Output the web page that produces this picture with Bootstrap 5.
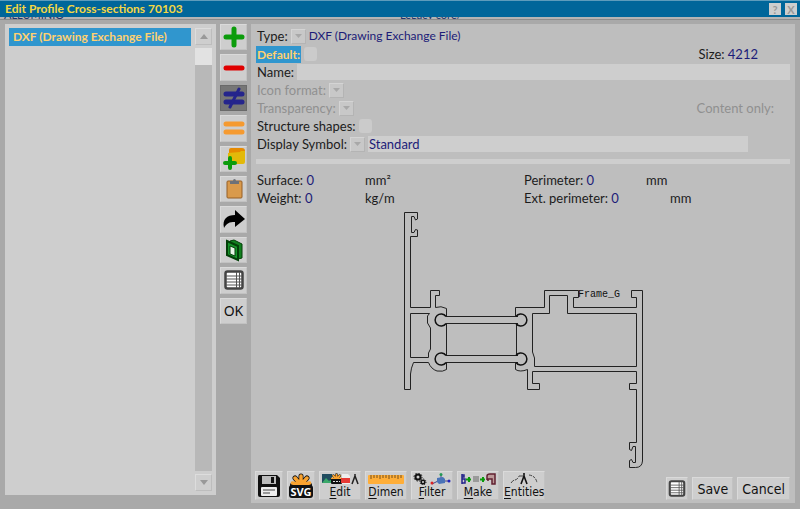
<!DOCTYPE html>
<html lang="en">
<head>
<meta charset="utf-8">
<meta name="viewport" content="width=device-width, initial-scale=1">
<title>Edit Profile Cross-sections 70103</title>
<link rel="stylesheet" href="https://cdn.jsdelivr.net/npm/bootstrap@5.3.0/dist/css/bootstrap.min.css">
<style>
:root{--face:#cecece;--panel:#bebebe;--frame:#a9a9a9;--ink:#1c1c1c;--value:#1c1c78;--pick:#3096ce;--gold:#ffd070}
body{font:13px/18px Lato,"Open Sans",sans-serif;color:var(--ink);background:var(--frame)}
.titlebar{height:17px;background:#00669a;border-top:1px solid #5d9cbc;color:#f5d742;padding:0 3px 0 5px}
.titlebar h1{font-size:12px;line-height:16px;font-weight:700}
.titlebar button{width:12px;height:12px;line-height:11px;font-size:11px;font-weight:700;color:#999;background:var(--face);border:0;padding:0}
.under-strip{height:3px;overflow:hidden;font-size:11px;background:#b4b4b4;border-bottom:1px solid #8c8c8c;color:#24346a}
.under-strip span{line-height:16px;margin-top:-10px}
.workspace{padding:4px 5px 6px}
.list-pane{width:211px;background:var(--face);padding:4px;margin-bottom:8px}
.list-pane .list-group-item{background:var(--pick);color:var(--gold);font-size:12px;font-weight:700;padding:0 4px;border:0;border-radius:0}
.scroll-track{width:17px;background:#b8b8b8}
.scroll-track button{height:17px;background:var(--face);border:1px solid #bdbdbd;border-top-color:#ddd;border-left-color:#ddd;padding:0;line-height:0}
.scroll-thumb{height:20px;background:#e2e2e2;border-top:3px solid var(--face)}
.scroll-end{border-top:3px solid var(--face)}
.tool-col{display:grid;grid-auto-rows:1fr;gap:4px;width:27px;height:300px}
.tile{background:var(--face);border:1px solid #c2c2c2;border-top-color:#dadada;border-left-color:#dadada;border-radius:0;padding:0;color:#111;font-family:"DejaVu Sans Condensed","Noto Sans",sans-serif}
.tile.pressed{background:#767676;border-color:#6a6a6a}
.tile.ok-tile{font-size:14px;line-height:18px;font-family:"Noto Sans",sans-serif}
.detail{background:var(--panel);padding:3px 5px 3px 4px}
.line{height:18px;gap:3px;padding-left:2px;white-space:nowrap}
.line .push{margin-left:auto}
.hot{background:var(--pick);color:var(--gold);font-size:12px;font-weight:700;padding:0 1px;margin-left:-1px;height:17px;line-height:17px}
.val{color:var(--value)}
.chosen{font-size:12px}
.off{color:#909090}
.drop{width:15px;height:15px;padding:0;border:1px solid #b4b4b4;border-top-color:#d4d4d4;border-left-color:#d4d4d4;border-radius:0;color:transparent;background:#c8c8c8 url("data:image/svg+xml,%3Csvg xmlns='http://www.w3.org/2000/svg' viewBox='0 0 7 4'%3E%3Cpath d='M0 0h7L3.5 4z' fill='%23a8a8a8'/%3E%3C/svg%3E") center/7px 4px no-repeat}
.tick{width:13px;height:14px;margin:0;border:0;border-radius:0;background-color:#cbcbcb}
.field{height:16px;min-height:0;padding:0 1px;border:0;border-radius:0;background:#cecece;color:var(--value);font-size:13px;line-height:16px}
.symbol-field{margin-right:42px}
.rule{height:5px;background:#cecece;margin:6px 0 7px 1px}
.unit-a{width:105px}
.unit-b{width:119px}
.unit-c{width:143px}
.facts{width:267px}
.section-view{width:250px;height:262px}
.section-view text{font:10px "Liberation Mono",monospace;fill:#111;stroke:none}
.act{width:42px;height:29px;font-size:12px;line-height:14px}
.act.slim{width:28px}
.act svg,.tile svg{display:block;margin:auto}
.act u{text-underline-offset:2px}
.end-btn{height:23px;font-size:14px;line-height:20px;padding:0 4px}
</style>
</head>
<body class="d-flex flex-column min-vh-100">
<svg class="d-none" aria-hidden="true">
<symbol id="sheet" viewBox="0 0 20 20"><rect x="1.500" y="1.500" width="17" height="17" rx="2" fill="#fff" stroke="#444" stroke-width="2.500"/><path d="M2 6h16M2 9h16M2 12h16M2 15h16" stroke="#555"/><path d="M12.500 2v16M15.500 2v16" stroke="#555"/></symbol>
<symbol id="flower" viewBox="0 0 24 13"><g stroke="#111" stroke-width="5" stroke-linecap="round"><path d="M12 12V3M12 12L6 5M12 12l6-7M12 12H3.500M12 12h8.500"/></g><g stroke="#f9a330" stroke-width="3.500" stroke-linecap="round"><path d="M12 12V3M12 12L6 5M12 12l6-7M12 12L3.500 10M12 12l8.500-2"/></g></symbol>
</svg>
<header class="titlebar d-flex align-items-center justify-content-between">
<h1 class="m-0">Edit Profile Cross-sections 70103</h1>
<div class="d-flex gap-1"><button type="button" aria-label="Help">?</button><button type="button" aria-label="Close">X</button></div>
</header>
<div class="under-strip row g-0 px-1"><span class="col-6">ALLUMINIO</span><span class="col-6">Legacy core/</span></div>
<main class="workspace flex-grow-1 d-flex gap-1">
<section class="list-pane d-flex">
<ul class="list-group list-group-flush flex-grow-1 me-1"><li class="list-group-item">DXF (Drawing Exchange File)</li></ul>
<div class="scroll-track d-flex flex-column">
<button type="button" aria-label="Scroll up"><svg width="8" height="5"><path d="M0 5h8L4 0z" fill="#999"/></svg></button>
<div class="scroll-thumb"></div>
<div class="scroll-end mt-auto d-grid"><button type="button" aria-label="Scroll down"><svg width="8" height="5"><path d="M0 0h8L4 5z" fill="#999"/></svg></button></div>
</div>
</section>
<nav class="tool-col" aria-label="Tools">
<button class="tile" type="button" aria-label="Add"><svg width="22" height="22"><path d="M11 3v16M3 11h16" stroke="#0c9c0c" stroke-width="5" stroke-linecap="round"/></svg></button>
<button class="tile" type="button" aria-label="Remove"><svg width="22" height="22"><path d="M3 11h16" stroke="#e00000" stroke-width="5" stroke-linecap="round"/></svg></button>
<button class="tile pressed" type="button" aria-label="Different"><svg width="22" height="22"><path d="M3 7h16M3 15h16" stroke="#25258c" stroke-width="5" stroke-linecap="round"/><path d="M16 2L7 20" stroke="#25258c" stroke-width="3" stroke-linecap="round"/></svg></button>
<button class="tile" type="button" aria-label="Equal"><svg width="22" height="22"><path d="M3 7h16M3 15h16" stroke="#f59a30" stroke-width="5" stroke-linecap="round"/></svg></button>
<button class="tile" type="button" aria-label="Add folder"><svg width="24" height="24"><path d="M7 3q0-2 2-2h11q3 0 3 3v2H7z" fill="#e68a00"/><path d="M6 6l12-1 1-1h4v11q0 2-2 2H6z" fill="#e3b909"/><path d="M8 11v10M3 16h10" stroke="#0c9c0c" stroke-width="4" stroke-linecap="round"/></svg></button>
<button class="tile" type="button" aria-label="Paste"><svg width="22" height="22"><rect x="4" y="3" width="15" height="17" rx="1" fill="#d99a4c" stroke="#955f27"/><path d="M7 3h3q0-2 1.500-2T13 3h3v3H7z" fill="#6d7178"/></svg></button>
<button class="tile" type="button" aria-label="Forward"><svg width="24" height="22"><path d="M2 19C0 10 5 6 13 6V1l10 9-10 8v-5c-6 0-8 1-11 6z" fill="#000"/></svg></button>
<button class="tile" type="button" aria-label="Profile"><svg width="22" height="24"><path d="M7 3l4-1 8 4v14l-4 1z" fill="#12801f" stroke="#033f08"/><path d="M4 3l11 5v14L4 17z" fill="#17942a" stroke="#033f08" stroke-width="2"/><path d="M7 8l5 2v8l-5-2z" fill="#e8f5e8" stroke="#033f08"/></svg></button>
<button class="tile" type="button" aria-label="Table"><svg width="20" height="20"><use href="#sheet"/></svg></button>
<button class="tile ok-tile" type="button">OK</button>
</nav>
<section class="detail flex-grow-1 d-flex flex-column">
<form>
<div class="line d-flex align-items-center"><label for="type">Type:</label><select id="type" class="drop form-select"><option>DXF</option></select><span class="val chosen">DXF (Drawing Exchange File)</span></div>
<div class="line d-flex align-items-center"><label for="def" class="hot">Default:</label><input id="def" type="checkbox" class="form-check-input tick"><span class="push me-1 pe-4">Size: <span class="val me-1">4212</span></span></div>
<div class="line d-flex align-items-center"><label for="name">Name:</label><input id="name" type="text" class="form-control field flex-grow-1 w-auto"></div>
<div class="line d-flex align-items-center off"><label for="fmt">Icon format:</label><select id="fmt" class="drop form-select"><option></option></select></div>
<div class="line d-flex align-items-center off"><label for="transp">Transparency:</label><select id="transp" class="drop form-select"><option></option></select><span class="push pe-3">Content only:</span></div>
<div class="line d-flex align-items-center"><label for="shapes">Structure shapes:</label><input id="shapes" type="checkbox" class="form-check-input tick"></div>
<div class="line d-flex align-items-center"><label for="symbol">Display Symbol:</label><select id="symbol" class="drop form-select"><option></option></select><input type="text" class="form-control field symbol-field flex-grow-1 w-auto" value="Standard" aria-label="Symbol name"></div>
</form>
<div class="rule"></div>
<div class="d-flex">
<div class="facts"><div class="line d-flex"><span class="unit-a">Surface: <span class="val">0</span></span>mm²</div><div class="line d-flex"><span class="unit-a">Weight: <span class="val">0</span></span>kg/m</div></div>
<div><div class="line d-flex"><span class="unit-b">Perimeter: <span class="val">0</span></span>mm</div><div class="line d-flex"><span class="unit-c">Ext. perimeter: <span class="val">0</span></span>mm</div></div>
</div>
<svg class="section-view mx-auto" viewBox="398 207 250 262" fill="none" stroke="#222" stroke-width="1" role="img" aria-label="Profile cross-section">
<path d="M446.500 316V308.500Q441 305.500 435.500 307.500V295.500H439.500V290.500H430.500V307.500H410.500V236.500H417.500V230L415.500 229.500L414 232.500H411.500V216.500H414L415.500 220L417.500 219V212.500H404.500V389.500H410.500V374Q411 368 413.500 362.500H428.500Q431 369 437 371Q443 372 446.500 369.500V363M446.500 324V355"/>
<path d="M410.500 313.500H429.500L427.500 316V323L430.500 328V349L428.500 353V357.500H410.500Z"/>
<path d="M446 316.500H518M446 323.500H518M446 355.500H518M446 362.500H518M516.500 324V355"/>
<path stroke="#111" stroke-width="1.500" d="M446 316.500A6 6 0 1 0 446 323.500M446 355.500A6 6 0 1 0 446 362.500M516 316.500A6 6 0 1 1 516 323.500M516 355.500A6 6 0 1 1 516 362.500"/>
<path d="M515.500 316V307.500H544.500V290.500H578.500V297.500H573.500V307.500H636.500V297.500H631.500V290.500H642.500V461Q642 467.500 635.500 467.500H629.500V460.500L631.500 459.500L633 462.500H635.500V446.500H633L631.500 450.500L629.500 449.500V442.500H636.500V389.500H629.500V383.500H636.500V371.500H532.500V383.500H539.500V389.500H527.500V369.500Q520 372.500 515.500 369.500V363"/>
<path d="M532.500 313.500H549.500V295.500H567.500V313.500H636.500V366.500H534.500V358L532.500 352Z"/>
<text x="578" y="297">Frame_G</text>
</svg>
<footer class="d-flex align-items-end justify-content-between mt-auto">
<div class="d-flex gap-1">
<button class="tile act slim" type="button" aria-label="Save to disk"><svg width="24" height="24"><path d="M2 1h18l3 3v17q0 2-2 2H3q-2 0-2-2V3q0-2 1-2z" fill="#111"/><path d="M5 2h14v8H5z" fill="#bbb"/><rect x="14" y="3" width="3" height="6" fill="#111"/><rect x="4" y="13" width="16" height="9" rx="1" fill="#eee"/><path d="M6 16h12M6 19h7" stroke="#444"/></svg></button>
<button class="tile act slim" type="button" aria-label="SVG"><svg width="26" height="26" viewBox="0 0 26 26"><use href="#flower" x="1" y="0" width="24" height="13"/><rect x="1" y="12" width="24" height="13" rx="3" fill="#111"/><text x="13" y="23" text-anchor="middle" font-size="11" font-weight="700" font-family="Open Sans" fill="#fff">SVG</text></svg></button>
<button class="tile act" type="button"><svg width="38" height="12"><rect x="1" y="1" width="10" height="9" fill="#204d60"/><path d="M1 10l4-5 3 3 3-2v4z" fill="#3aa869"/><use href="#flower" x="9" y="0" width="13" height="7"/><rect x="10" y="6" width="11" height="5" rx="1" fill="#111"/><path d="M12 8.500h7" stroke="#ddd" stroke-dasharray="2 1"/><path d="M21 1h6l2 2v8h-8z" fill="#eee"/><path d="M20 5h9v5h-9z" fill="#e63a35"/><path d="M31 11l3-8 3 8M34 1v3" fill="none" stroke="#222" stroke-width="1.500"/></svg><u>E</u>dit</button>
<button class="tile act" type="button"><svg width="38" height="12"><rect x="1" y="2" width="36" height="9" rx="1" fill="#ffae38"/><path d="M4 2v4M7 2v3M10 2v3M13 2v4M16 2v3M19 2v3M22 2v4M25 2v3M28 2v3M31 2v4M34 2v3" stroke="#74501c"/></svg><u>D</u>imen</button>
<button class="tile act" type="button"><svg width="38" height="12"><g fill="none" stroke="#111"><circle cx="5" cy="4" r="2.500" stroke-width="2"/><circle cx="5" cy="4" r="4" stroke-dasharray="1.500 1.600"/><circle cx="10" cy="9" r="1.800" stroke-width="1.500"/><circle cx="10" cy="9" r="3" stroke-dasharray="1 1.350"/></g><path d="M28 5V1M25 8l-6 3M31 8h5" stroke="#448"/><path d="M24 5l6-1 2 2v4l-6 1-2-2z" fill="#4a73b8"/><circle cx="19" cy="10" r="1.500" fill="#d22"/><circle cx="28" cy="1.500" r="1.500" fill="#295"/><circle cx="36" cy="8" r="1.500" fill="#22b"/></svg><u>F</u>ilter</button>
<button class="tile act" type="button"><svg width="38" height="12"><path d="M3 1v10M3 2h2v2H3M3 6h3v4H3" stroke="#25258c" stroke-width="1.500" fill="none"/><path d="M10 4v5M7 6.500h5M24 4v5M21 6.500h5" stroke="#0a9a0a" stroke-width="2"/><path d="M14 4h6M14 6h6M14 8h6" stroke="#666"/><path d="M28 7V3q0-2 3-2h5v10h-3V6h-4v2" stroke="#612030" stroke-width="1.500" fill="#b99"/></svg><u>M</u>ake</button>
<button class="tile act" type="button"><svg width="38" height="12"><g fill="none" stroke="#444"><path d="M6 10q2-3 4-3t4-4M14 3h4" stroke-dasharray="4 1"/><path d="M24 2q7 1 8 8" stroke-dasharray="3 1"/><path d="M16 11l3-8 3 8M19 0v4" stroke="#111" stroke-width="1.600"/></g></svg><u>E</u>ntities</button>
</div>
<div class="d-flex gap-1"><button class="tile end-btn px-0" type="button" aria-label="Table view"><svg width="20" height="17"><use href="#sheet"/></svg></button><button class="tile end-btn" type="button">Save</button><button class="tile end-btn" type="button">Cancel</button></div>
</footer>
</section>
</main>
<script src="https://cdn.jsdelivr.net/npm/bootstrap@5.3.0/dist/js/bootstrap.bundle.min.js"></script>
</body>
</html>
